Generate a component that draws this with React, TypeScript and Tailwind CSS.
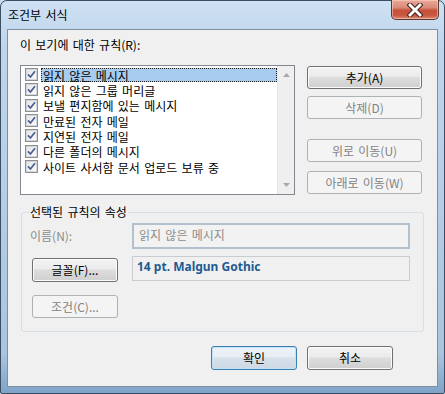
import React from "react";

const FONT = "font-['Noto_Sans_CJK_KR','Noto_Sans',sans-serif] [word-spacing:1.6px]";

function Btn({
  children,
  disabled,
  def,
  className = "",
}: {
  children: React.ReactNode;
  disabled?: boolean;
  def?: boolean;
  className?: string;
}) {
  if (disabled) {
    return (
      <div
        className={`flex items-center justify-center rounded-[3px] border border-[#adb2b5] bg-[#f4f4f4] text-[12px] text-[#838383] ${className}`}
      >
        {children}
      </div>
    );
  }
  if (def) {
    return (
      <div
        className={`flex items-center justify-center rounded-[3px] border border-[#3c7fb1] bg-[linear-gradient(#eef3f8_0%,#e6edf3_45%,#d6e0e9_50%,#cdd9e4_100%)] shadow-[inset_0_0_0_1px_#bfe3f8] text-[12px] text-black ${className}`}
      >
        {children}
      </div>
    );
  }
  return (
    <div
      className={`flex items-center justify-center rounded-[3px] border border-[#707070] bg-[linear-gradient(#f2f2f2_0%,#ebebeb_45%,#dddddd_50%,#cfcfcf_100%)] shadow-[inset_0_0_0_1px_#fcfcfc] text-[12px] text-black ${className}`}
    >
      {children}
    </div>
  );
}

function CheckBox() {
  return (
    <div className="w-[13px] h-[13px] border border-[#8f8f8f] bg-[linear-gradient(135deg,#dcdcdc,#ffffff)] flex items-center justify-center shrink-0">
      <div className="w-[11px] h-[11px] border border-[#d2d5d9] bg-[linear-gradient(135deg,#e4e6e9,#fbfbfb)] flex items-center justify-center">
        <svg width="9" height="9" viewBox="0 0 9 9">
          <path d="M1 4.4 L3.4 7 L8 1.2" fill="none" stroke="#4a5e8e" strokeWidth="1.7" />
        </svg>
      </div>
    </div>
  );
}

const items = [
  "읽지 않은 메시지",
  "읽지 않은 그룹 머리글",
  "보낼 편지함에 있는 메시지",
  "만료된 전자 메일",
  "지연된 전자 메일",
  "다른 폴더의 메시지",
  "사이트 사서함 문서 업로드 보류 중",
];

export default function App() {
  return (
    <div className={`w-[445px] h-[394px] relative overflow-hidden bg-[#c9dcef] ${FONT}`}>
      <div className="w-[445px] h-[394px] flex flex-col rounded-t-[7px] rounded-b-[2px] border border-[#3d4e63] bg-[linear-gradient(180deg,#cfe1f3_0%,#bed5ec_12%,#b8d0e9_40%,#aac4df_90%,#7ea3c8_100%)]">
        {/* Title bar */}
        <div className="h-[28px] flex items-center pl-[7px] text-[12px] text-black">
          조건부 서식
        </div>
        {/* Client */}
        <div className="flex-1 mx-[6px] mb-[6px] border border-[#7e8fa2] bg-[#f0f0f0] flex flex-col pl-[12px] pt-[5px]">
          <div className="h-[20px] leading-[20px] text-[12px] text-black">
            이 보기에 대한 규칙(R):
          </div>
          <div className="mt-[10px] flex">
            {/* List */}
            <div className="w-[275px] h-[130px] border border-[#828790] bg-white flex">
              <div className="flex-1 flex flex-col pt-[1px] pl-[4px]">
                {items.map((t, i) => (
                  <div key={t} className="h-[15.33px] flex items-center">
                    <CheckBox />
                    <div
                      className={`ml-[3px] flex-1 h-[14px] leading-[13px] text-[12px] text-black pl-[1px] ${
                        i === 0 ? "bg-[#a8cbf0] border border-dotted border-[#222]" : "border border-transparent"
                      }`}
                    >
                      {t}
                    </div>
                  </div>
                ))}
              </div>
              <div className="w-[17px] bg-[#efefef] border-l border-[#e6e6e6] flex flex-col items-center justify-between py-[7px]">
                <svg width="7" height="4" viewBox="0 0 7 4">
                  <path d="M0 4 L3.5 0 L7 4 Z" fill="#a9a9a9" />
                </svg>
                <svg width="7" height="4" viewBox="0 0 7 4">
                  <path d="M0 0 L3.5 4 L7 0 Z" fill="#a9a9a9" />
                </svg>
              </div>
            </div>
            {/* Button column */}
            <div className="ml-[12px] w-[115px] flex flex-col">
              <Btn className="mt-[1px] h-[23px]">추가(A)</Btn>
              <Btn disabled className="mt-[7px] h-[23px]">삭제(D)</Btn>
              <Btn disabled className="mt-[20px] h-[23px]">위로 이동(U)</Btn>
              <Btn disabled className="mt-[9px] h-[23px]">아래로 이동(W)</Btn>
            </div>
          </div>
          {/* Group box */}
          <div className="relative mt-[17px] ml-[1px] w-[403px] h-[120px] border border-[#d5dfe5] rounded-[3px] flex flex-col">
            <span className="absolute -top-[10px] left-[7px] px-[1px] bg-[#f0f0f0] text-[12px] leading-[18px] text-black">
              선택된 규칙의 속성
            </span>
            <div className="mt-[10px] flex items-center">
              <div className="w-[110px] pl-[8px] text-[12px] text-[#8b8b8b]">이름(N):</div>
              <div className="w-[278px] h-[26px] border-2 border-[#b3c1cf] bg-[#f2f2f2] pl-[5px] text-[12px] leading-[20px] text-[#8b8b8b]">
                읽지 않은 메시지
              </div>
            </div>
            <div className="mt-[7px] flex items-start">
              <div className="w-[110px] pl-[10px] pt-[2px]">
                <Btn className="w-[86px] h-[24px]">글꼴(F)...</Btn>
              </div>
              <div className="w-[278px] h-[25px] border border-[#c9ccd1] bg-[#f0f0f0] pl-[4px] pt-[2px] font-['Noto_Sans',sans-serif] font-bold text-[12px] leading-[16px] text-[#1f5a92] [word-spacing:0px]">
                14 pt. Malgun Gothic
              </div>
            </div>
            <div className="mt-[13px] pl-[10px]">
              <Btn disabled className="w-[86px] h-[23px]">조건(C)...</Btn>
            </div>
          </div>
          {/* Bottom buttons */}
          <div className="mt-[14px] flex justify-end pr-[44px] gap-[10px]">
            <Btn def className="w-[86px] h-[24px]">확인</Btn>
            <Btn className="w-[86px] h-[24px]">취소</Btn>
          </div>
        </div>
      </div>
      {/* Close button */}
      <div className="absolute top-0 right-[6px] w-[48px] h-[20px] rounded-b-[5px] border border-t-0 border-[#5b3833] bg-[linear-gradient(180deg,#e9a99a_0%,#d98a78_40%,#c7503b_55%,#c8573f_80%,#de8a6e_100%)] shadow-[inset_0_0_0_1px_rgba(255,220,210,0.5)] flex items-center justify-center">
        <svg width="16" height="14" viewBox="0 0 16 14">
          <path d="M3 2 L13 12 M13 2 L3 12" stroke="#4a2620" strokeWidth="5" strokeLinecap="square" />
          <path d="M3 2 L13 12 M13 2 L3 12" stroke="#ffffff" strokeWidth="2.8" strokeLinecap="square" />
        </svg>
      </div>
    </div>
  );
}
